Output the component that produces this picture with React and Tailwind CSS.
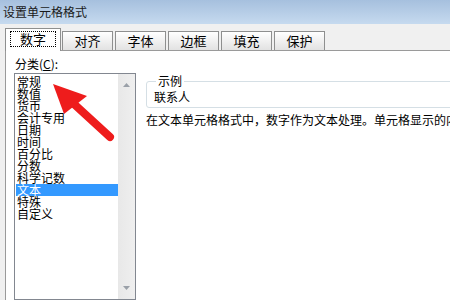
import React from "react";

const items = ["常规", "数值", "货币", "会计专用", "日期", "时间", "百分比", "分数", "科学记数", "文本", "特殊", "自定义"];
const tabs = ["对齐", "字体", "边框", "填充", "保护"];

export default function App() {
  return (
    <div className="relative w-[450px] h-[300px] overflow-hidden bg-[#f0f0f0] flex flex-col font-['Noto_Sans_CJK_SC','SimSun',sans-serif] text-[12px] text-black">
      <div className="h-[24px] shrink-0 bg-linear-to-b from-[#a6c0de] to-[#c6daef] px-[3px] pt-[5px] leading-[14px] text-[12px] text-[#1a1a1a]">
        设置单元格格式
      </div>
      <div className="h-[26px] shrink-0 flex items-end pl-[5px]">
        <div className="relative z-10 -mb-px w-[56px] h-[23px] bg-white border border-b-0 border-[#8e8f8f] pt-[2px] px-[4px]">
          <div className="h-[16px] border border-dotted border-black flex items-center justify-center text-[13px] leading-[14px]">
            数字
          </div>
        </div>
        <div className="flex gap-[2px] ml-px">
          {tabs.map((t) => (
            <div
              key={t}
              className="w-[51px] h-[19px] border border-b-0 border-[#8e8f8f] bg-linear-to-b from-white to-[#e2e2e2] flex items-center justify-center text-[13px] leading-[14px]"
            >
              {t}
            </div>
          ))}
        </div>
      </div>
      <div className="flex-1 ml-[5px] bg-white border-l border-t border-[#9a9a9a] flex min-h-0">
        <div className="flex flex-col pl-[8px] shrink-0">
          <div className="mt-[5px] h-[16px] leading-[16px] pl-px">
            分类(<span className="underline">C</span>):
          </div>
          <div className="mt-px flex-1 w-[122px] border border-[#828790] flex min-h-0 h-[240px]">
            <div className="flex-1 pt-[2px] pl-px">
              {items.map((it) => (
                <div
                  key={it}
                  className={
                    "h-[12px] leading-[12px] pl-[1px] whitespace-nowrap " +
                    (it === "文本" ? "bg-[#3399ff] text-white" : "")
                  }
                >
                  {it}
                </div>
              ))}
            </div>
            <div className="w-[17px] bg-linear-to-r from-[#e8e8e8] to-[#efefef] flex flex-col justify-between items-center py-[9px]">
              <svg width="7" height="4" viewBox="0 0 7 4"><path d="M0 4 L3.5 0 L7 4 Z" fill="#9aa0a8" /></svg>
              <svg width="7" height="4" viewBox="0 0 7 4"><path d="M0 0 L3.5 4 L7 0 Z" fill="#9aa0a8" /></svg>
            </div>
          </div>
        </div>
        <div className="ml-[10px] flex flex-col shrink-0">
          <fieldset className="mt-[23px] w-[400px] h-[34px] border border-[#d5dfe5] rounded-[3px] pl-[7px]">
            <legend className="px-[2px] ml-[2px] leading-[14px]">示例</legend>
            <div className="leading-[14px] mt-[2px]">联系人</div>
          </fieldset>
          <div className="mt-[5px] leading-[14px] whitespace-nowrap">
            在文本单元格格式中，数字作为文本处理。单元格显示的内容与输入的内容完全一致。
          </div>
        </div>
      </div>
      <svg className="absolute left-0 top-0 pointer-events-none" width="450" height="300" viewBox="0 0 450 300">
        <line x1="74" y1="104" x2="110" y2="137" stroke="#ee1c1c" strokeWidth="8" strokeLinecap="round" />
        <polygon points="53,84 87,96 64,114" fill="#ee1c1c" />
      </svg>
    </div>
  );
}
